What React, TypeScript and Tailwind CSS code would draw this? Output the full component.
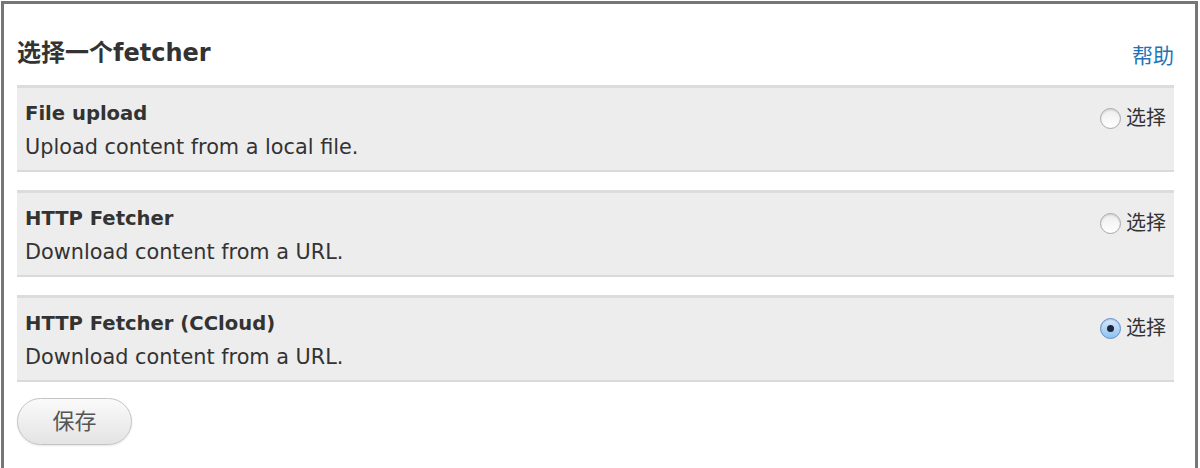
import React from "react";

const rows = [
  { title: "File upload", desc: "Upload content from a local file.", checked: false },
  { title: "HTTP Fetcher", desc: "Download content from a URL.", checked: false },
  { title: "HTTP Fetcher (CCloud)", desc: "Download content from a URL.", checked: true },
];

function Radio({ checked }: { checked: boolean }) {
  if (checked) {
    return (
      <span className="w-[21px] h-[21px] rounded-full border border-[#5b8fc9] bg-gradient-to-b from-[#d6e9fb] to-[#8fc1f0] flex items-center justify-center shadow-[inset_0_1px_1px_rgba(0,0,0,0.15)]">
        <span className="w-[7px] h-[7px] rounded-full bg-[#1b2a3a]" />
      </span>
    );
  }
  return (
    <span className="w-[21px] h-[21px] rounded-full border border-[#a9a9a9] bg-gradient-to-b from-[#eeeeee] to-[#ffffff] shadow-[inset_0_1px_2px_rgba(0,0,0,0.15)]" />
  );
}

export default function App() {
  return (
    <div className="w-[1200px] h-[468px] bg-white pl-[1px] pt-[1px] pr-[2px]" style={{ fontFamily: '"DejaVu Sans", "Noto Sans CJK SC", sans-serif' }}>
      <div className="h-[467px] border-[3px] border-[#767676] border-b-0 pl-[13px] pr-[21px] pt-[33px]">
        <div className="flex items-start justify-between h-[48px]">
          <h2 className="text-[24px] font-bold text-[#333] leading-[32px]">选择一个fetcher</h2>
          <a className="text-[21px] text-[#1f74b8] leading-[28px] mt-[5px]">帮助</a>
        </div>
        <div className="flex flex-col gap-[18px]">
          {rows.map((r) => (
            <div key={r.title} className="h-[87px] bg-[#ededed] border-t-[3px] border-t-[#dcdcdc] border-b-[2px] border-b-[#dadada] flex justify-between pl-[8px] pr-[8px] pt-[13px]">
              <div>
                <div className="text-[19.6px] font-bold text-[#333] leading-[26px]">{r.title}</div>
                <div className="text-[20.8px] text-[#333] leading-[26px] mt-[7px]">{r.desc}</div>
              </div>
              <div className="flex items-center gap-[5px] h-[26px] mt-[4px]">
                <Radio checked={r.checked} />
                <span className="text-[20px] text-[#333]">选择</span>
              </div>
            </div>
          ))}
        </div>
        <button className="mt-[16px] w-[115px] h-[47px] rounded-full border border-[#c4c4c4] bg-gradient-to-b from-[#fafafa] to-[#e4e4e4] text-[22px] text-[#555] shadow-[0_1px_2px_rgba(0,0,0,0.1)]">
          保存
        </button>
      </div>
    </div>
  );
}
